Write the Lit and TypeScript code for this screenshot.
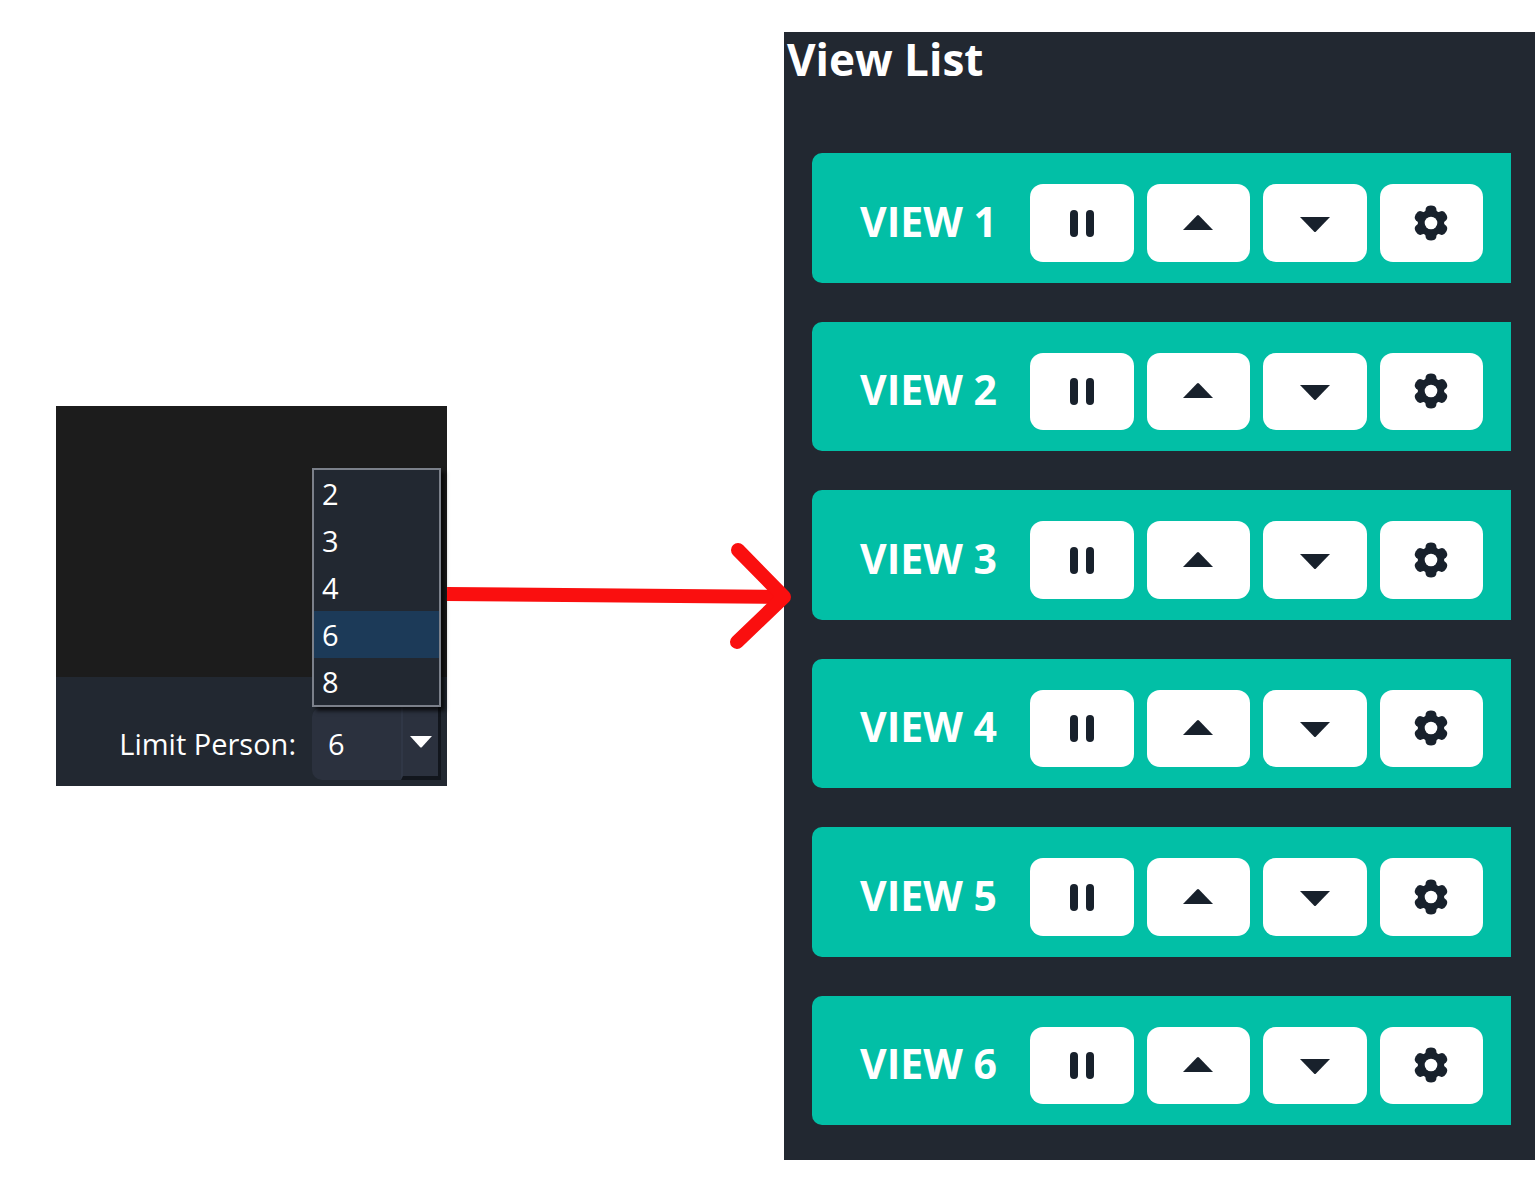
import { LitElement, html, svg, css } from "lit";
import { customElement, property, state } from "lit/decorators.js";

const LIMITS = [2, 3, 4, 6, 8];

const ICONS = {
  pause: svg`<rect x="8" y="7" width="8" height="27" rx="4"/><rect x="24" y="7" width="8" height="27" rx="4"/>`,
  up: svg`<path d="M5 27 L19 12.5 Q20 11.5 21 12.5 L35 27 Z"/>`,
  down: svg`<path d="M5 14 L19 28.500 Q20 29.500 21 28.500 L35 14 Z"/>`,
  gear: svg`<circle cx="20" cy="20" r="13.200"/>
    ${[0, 60, 120, 180, 240, 300].map(
      (turn) => svg`<path transform="rotate(${turn} 20 20)" d="M14 10L14.800 5.500Q15.500 2.500 20 2.500Q24.500 2.500 25.200 5.500L26 10Z"/>`
    )}
    <circle cx="20" cy="20" r="6.300" fill="#fff"/>`,
};

@customElement("view-row")
class ViewRow extends LitElement {
  @property({ type: Number }) number = 1;

  static styles = css`
    :host {
      display: flex;
      align-items: stretch;
      box-sizing: border-box;
      padding: 31px 28px 21px 48px;
      border-radius: 10px 0 0 10px;
      background: #02bfa6;
      color: #fff;
    }
    .name {
      flex: 170;
      align-self: center;
      min-width: 0;
      padding-bottom: 4px;
      font-size: 41px;
      font-weight: 700;
      line-height: 48px;
      white-space: nowrap;
    }
    .actions {
      flex: 453;
      display: grid;
      grid-template-columns: repeat(4, 1fr);
      gap: 13px;
      min-height: 72px;
    }
    .action {
      display: flex;
      align-items: center;
      justify-content: center;
      padding: 0;
      border: 0;
      border-radius: 13px;
      background: #fff;
      color: #18212c;
      cursor: pointer;
    }
    .icon {
      width: 40px;
      height: 40px;
      fill: currentColor;
    }
  `;

  private action(label: string, icon: unknown) {
    return html`<button class="action" type="button" aria-label="${label} view ${this.number}">
      <svg class="icon" viewBox="0 0 40 40" aria-hidden="true">${icon}</svg>
    </button>`;
  }

  render() {
    return html`
      <span class="name">VIEW ${this.number}</span>
      <div class="actions">
        ${this.action("Pause", ICONS.pause)}
        ${this.action("Move up", ICONS.up)}
        ${this.action("Move down", ICONS.down)}
        ${this.action("Configure", ICONS.gear)}
      </div>
    `;
  }
}

@customElement("app-root")
class AppRoot extends LitElement {
  @state() private limit = 6;

  static styles = css`
    :host {
      display: grid;
      grid-template-columns: 391fr 337fr 751fr;
      box-sizing: border-box;
      min-height: 100vh;
      padding: 32px 0 31px 56px;
      background: #fff;
      color: #fff;
      font-family: "Open Sans", "Noto Sans", sans-serif;
    }
    .settings {
      align-self: center;
      background: #222831;
    }
    .stage {
      height: 271px;
      background: #1c1c1c;
    }
    .bar {
      display: flex;
      align-items: flex-end;
      justify-content: flex-end;
      gap: 16px;
      padding: 30px 6px 6px;
    }
    .label {
      font-size: 29px;
      line-height: 73px;
      white-space: nowrap;
    }
    .picker {
      position: relative;
      width: 129px;
      height: 73px;
    }
    .select {
      box-sizing: border-box;
      width: 100%;
      height: 100%;
      padding: 0 16px;
      border: 0;
      border-radius: 10px 0 0 10px;
      appearance: none;
      background: #2b313e;
      color: #fff;
      font: inherit;
      font-size: 29px;
    }
    .drop {
      position: absolute;
      right: 0;
      bottom: 0;
      display: flex;
      align-items: center;
      justify-content: center;
      box-sizing: border-box;
      width: 40px;
      height: 73px;
      border-left: 2px solid #303746;
      border-right: 3px solid #12161d;
      border-bottom: 4px solid #12161d;
      pointer-events: none;
    }
    .caret {
      width: 24px;
      height: 12px;
      fill: #fff;
    }
    .options {
      position: absolute;
      right: 0;
      bottom: 73px;
      box-sizing: border-box;
      width: 129px;
      margin: 0;
      padding: 0;
      border: 2px solid #7b808a;
      background: #222831;
      box-shadow: 4px 4px 4px rgba(0, 0, 0, 0.7);
      list-style: none;
    }
    .option {
      padding-left: 8px;
      font-size: 29px;
      line-height: 47px;
      cursor: pointer;
    }
    .option[aria-selected="true"] {
      background: #1c3a58;
    }
    .flow {
      align-self: center;
      position: relative;
      z-index: 1;
      width: 100%;
      overflow: visible;
      fill: none;
      stroke: #fa0f0f;
      stroke-width: 14;
    }
    .views {
      display: flex;
      flex-direction: column;
      box-sizing: border-box;
      padding: 0 24px 35px 28px;
      background: #222831;
    }
    .title {
      margin: 0 0 67px -25px;
      font-size: 44px;
      font-weight: 700;
      line-height: 54px;
    }
    .list {
      flex: 1;
      display: grid;
      grid-auto-rows: 1fr;
      gap: 39px;
    }
  `;

  render() {
    return html`
      <section class="settings">
        <div class="stage"></div>
        <div class="bar">
          <label class="label" for="limit">Limit Person:</label>
          <div class="picker">
            <select
              class="select"
              id="limit"
              @change=${(e: Event) => (this.limit = Number((e.target as HTMLSelectElement).value))}
            >
              ${LIMITS.map((n) => html`<option value=${n} ?selected=${n === this.limit}>${n}</option>`)}
            </select>
            <span class="drop">
              <svg class="caret" viewBox="0 0 24 12" aria-hidden="true"><path d="M1 0H23L13 11Q12 12 11 11Z"/></svg>
            </span>
            <ul class="options" role="listbox" aria-label="Limit Person">
              ${LIMITS.map(
                (n) => html`<li
                  class="option"
                  role="option"
                  aria-selected=${n === this.limit ? "true" : "false"}
                  @click=${() => (this.limit = n)}
                >${n}</li>`
              )}
            </ul>
          </div>
        </div>
      </section>
      <svg class="flow" viewBox="0 0 337 108" aria-hidden="true">
        <path d="M0 52L337 55"/>
        <path stroke-linecap="round" stroke-linejoin="round" d="M291 8L337 55L290 100"/>
      </svg>
      <section class="views">
        <h1 class="title">View List</h1>
        <div class="list">
          ${Array.from({ length: this.limit }, (_, i) => html`<view-row .number=${i + 1}></view-row>`)}
        </div>
      </section>
    `;
  }
}
